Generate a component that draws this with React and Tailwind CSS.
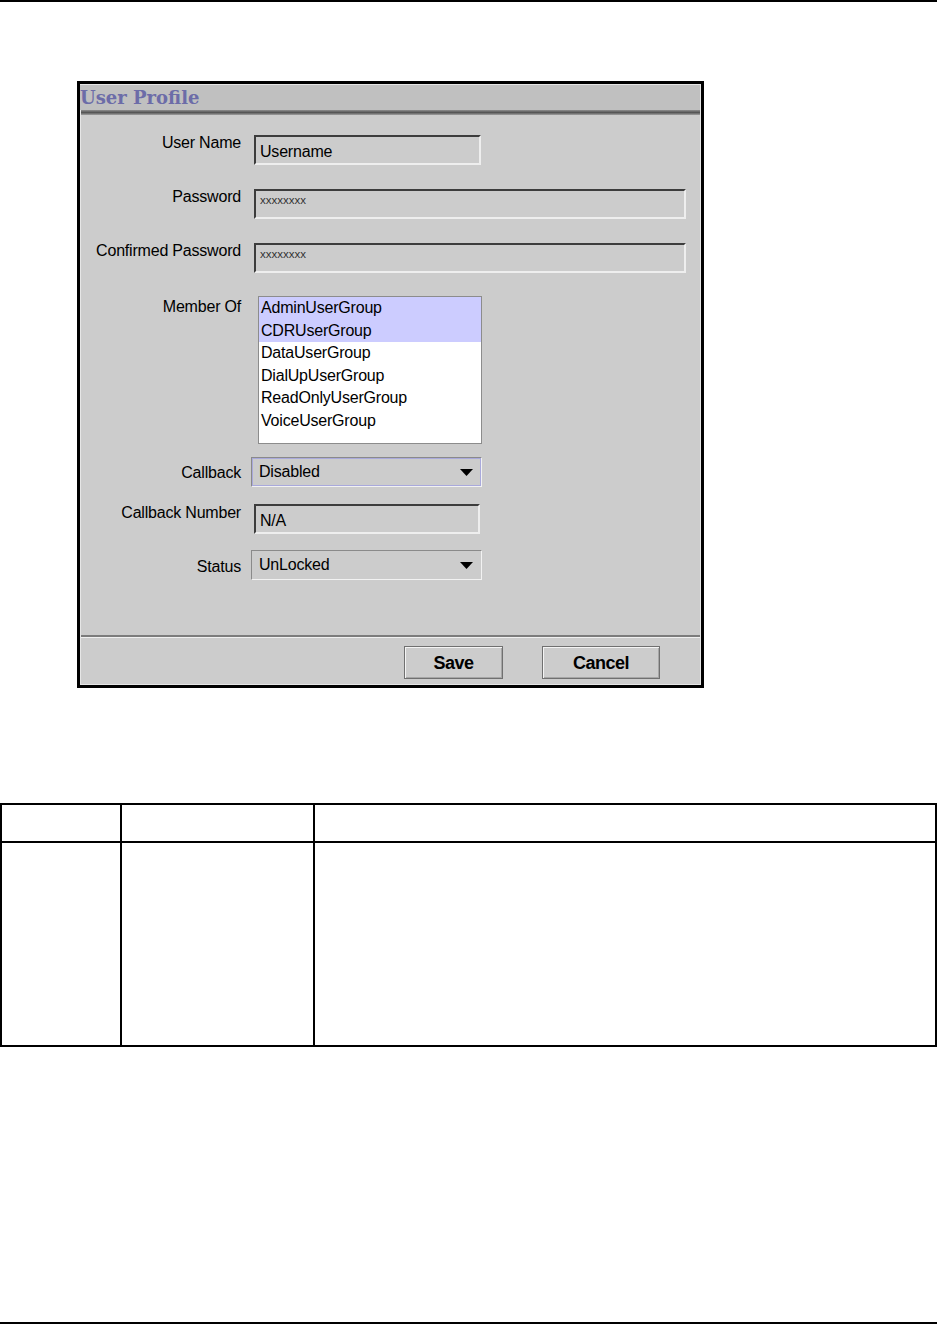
import React from 'react';

// Classic Java-ish dialog screenshot embedded in a manual page, followed by an empty table
const groups = [
  { name: 'AdminUserGroup', selected: true },
  { name: 'CDRUserGroup', selected: true },
  { name: 'DataUserGroup', selected: false },
  { name: 'DialUpUserGroup', selected: false },
  { name: 'ReadOnlyUserGroup', selected: false },
  { name: 'VoiceUserGroup', selected: false },
];

function Arrow() {
  return (
    <svg width="13" height="7" viewBox="0 0 13 7" className="shrink-0">
      <polygon points="0,0 13,0 6.5,7" fill="#000" />
    </svg>
  );
}

function Field({ width, children, small }) {
  return (
    <div
      className={
        'box-border h-[30px] border-2 border-t-[#3c3c3c] border-l-[#3c3c3c] border-r-[#eeeeee] border-b-[#eeeeee] bg-[#cccccc] pl-[4px] ' +
        (small ? 'pt-[3px] text-[11.5px] leading-[13px] tracking-[0px] text-[#333333]' : 'pt-[6px] leading-[18px]')
      }
      style={{ width }}
    >
      {children}
    </div>
  );
}

function Select({ value, focused }) {
  return (
    <div
      className={
        'box-border ml-[10px] w-[231px] h-[30px] border border-t-[#8a8a8a] border-l-[#8a8a8a] border-r-[#f2f2f2] border-b-[#f2f2f2] bg-[#cccccc] flex items-center pl-[7px] pr-[8px] ' +
        (focused ? 'shadow-[inset_0_0_0_1px_#a9a9dc]' : '')
      }
    >
      <span className="flex-1 leading-[18px]">{value}</span>
      <Arrow />
    </div>
  );
}

export default function App() {
  return (
    <div className="w-[937px] h-[1324px] bg-white font-['Liberation_Sans',Arial,sans-serif] text-[16px] tracking-[-0.2px] text-black">
      <div className="h-[2px] bg-black" />

      {/* Dialog */}
      <div className="ml-[77px] mt-[79px] w-[627px] h-[607px] border-[3px] border-black">
        <div className="h-full border border-[#e6e6e6] flex flex-col bg-[#cccccc]">
          <div className="h-[25px] bg-[#c0c0c0] pl-0 ml-[-1px] leading-[25px] font-['DejaVu_Serif',serif] font-bold text-[18px] tracking-[0px] text-[#6c6ca8]">
            User Profile
          </div>
          <div className="h-[5px] bg-linear-to-b from-[#8e8e8e] via-[#555555] to-[#a0a0a0]" />

          <div className="h-[520px] flex flex-col">
            <div className="flex items-start mt-[20px]">
              <div className="w-[160px] text-right leading-[18px] mt-[-1px]">User Name</div>
              <div className="ml-[13px]">
                <Field width={227}>Username</Field>
              </div>
            </div>

            <div className="flex items-start mt-[24px]">
              <div className="w-[160px] text-right leading-[18px] mt-[-1px]">Password</div>
              <div className="ml-[13px]">
                <Field width={432} small>xxxxxxxx</Field>
              </div>
            </div>

            <div className="flex items-start mt-[24px]">
              <div className="w-[160px] text-right leading-[18px] mt-[-1px]">Confirmed Password</div>
              <div className="ml-[13px]">
                <Field width={432} small>xxxxxxxx</Field>
              </div>
            </div>

            <div className="flex items-start mt-[23px]">
              <div className="w-[160px] text-right leading-[18px] mt-[2px]">Member Of</div>
              <div className="ml-[17px] box-border w-[224px] h-[148px] border border-[#8c8c8c] bg-white">
                {groups.map((g) => (
                  <div
                    key={g.name}
                    className={'h-[22.5px] leading-[22.5px] pl-[2px] ' + (g.selected ? 'bg-[#ccccff]' : '')}
                  >
                    {g.name}
                  </div>
                ))}
              </div>
            </div>

            <div className="flex items-start mt-[13px]">
              <div className="w-[160px] text-right leading-[18px] mt-[7px]">Callback</div>
              <Select value="Disabled" focused />
            </div>

            <div className="flex items-start mt-[17px]">
              <div className="w-[160px] text-right leading-[18px] mt-[0px]">Callback Number</div>
              <div className="ml-[13px]">
                <Field width={226}>N/A</Field>
              </div>
            </div>

            <div className="flex items-start mt-[16px]">
              <div className="w-[160px] text-right leading-[18px] mt-[8px]">Status</div>
              <Select value="UnLocked" />
            </div>
          </div>

          <div className="h-[2px] bg-[#7c7c7c]" />
          <div className="h-[1px] bg-[#f0f0f0]" />

          <div className="flex-1 flex items-start pt-[8px] pl-[323px] gap-[39px]">
            <button className="box-border w-[99px] h-[33px] border border-[#707070] bg-[#cccccc] shadow-[inset_1px_1px_0_#f4f4f4,inset_-1px_-1px_0_#a6a6a6] font-bold text-[18px] tracking-[-0.5px] leading-[20px]">
              Save
            </button>
            <button className="box-border w-[118px] h-[33px] border border-[#707070] bg-[#cccccc] shadow-[inset_1px_1px_0_#f4f4f4,inset_-1px_-1px_0_#a6a6a6] font-bold text-[18px] tracking-[-0.5px] leading-[20px]">
              Cancel
            </button>
          </div>
        </div>
      </div>

      {/* Field description table */}
      <div className="mt-[115px] w-[937px] border-2 border-black">
        <div className="grid grid-cols-[120px_193px_1fr] h-[38px] border-b-2 border-black">
          <div className="border-r-2 border-black" />
          <div className="border-r-2 border-black" />
          <div />
        </div>
        <div className="grid grid-cols-[120px_193px_1fr] h-[202px]">
          <div className="border-r-2 border-black" />
          <div className="border-r-2 border-black" />
          <div />
        </div>
      </div>

      <div className="mt-[275px] h-[2px] bg-black" />
    </div>
  );
}
